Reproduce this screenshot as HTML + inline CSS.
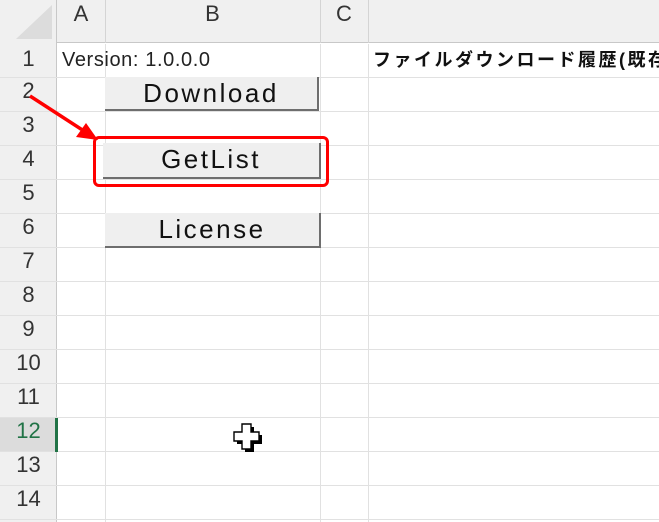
<!DOCTYPE html>
<html><head><meta charset="utf-8"><style>
*{margin:0;padding:0;box-sizing:border-box}
body{width:659px;height:522px;overflow:hidden;background:#fff;position:relative;font-family:"Liberation Sans","Noto Sans CJK JP",sans-serif}
.a{position:absolute}
.hl{position:absolute;height:1px;background:#e1e1e1}
.vl{position:absolute;width:1px;background:#e1e1e1}
.rn{position:absolute;left:0;width:57px;text-align:center;font-size:22px;color:#333;line-height:34px}
.btn{position:absolute;background:#efefef;border-right:2px solid #6e6e6e;border-bottom:2px solid #6e6e6e;text-align:center;font-size:26px;color:#111;letter-spacing:2.5px}
</style></head><body>
<div class="a" style="left:0;top:0;width:659px;height:43px;background:#f0f0f0;border-bottom:1px solid #c8c8c8"></div>
<div class="a" style="left:0;top:0;width:57px;height:522px;background:#f0f0f0;border-right:1px solid #c8c8c8"></div>
<svg class="a" style="left:14px;top:3px" width="40" height="38"><polygon points="38,2 38,36 2,36" fill="#dcdcdc"/></svg>
<div class="a" style="left:57px;top:0;width:48px;text-align:center;font-size:22px;line-height:28px;color:#333">A</div>
<div class="a" style="left:105px;top:0;width:215px;text-align:center;font-size:22px;line-height:28px;color:#333">B</div>
<div class="a" style="left:320px;top:0;width:48px;text-align:center;font-size:22px;line-height:28px;color:#333">C</div>
<div class="vl" style="left:105px;top:0;height:43px;background:#d4d4d4"></div>
<div class="vl" style="left:320px;top:0;height:43px;background:#d4d4d4"></div>
<div class="vl" style="left:368px;top:0;height:43px;background:#d4d4d4"></div>
<div class="vl" style="left:105px;top:44px;height:478px"></div>
<div class="vl" style="left:320px;top:44px;height:478px"></div>
<div class="vl" style="left:368px;top:44px;height:478px"></div>
<div class="hl" style="left:0;top:77px;width:659px"></div>
<div class="hl" style="left:0;top:111px;width:659px"></div>
<div class="hl" style="left:0;top:145px;width:659px"></div>
<div class="hl" style="left:0;top:179px;width:659px"></div>
<div class="hl" style="left:0;top:213px;width:659px"></div>
<div class="hl" style="left:0;top:247px;width:659px"></div>
<div class="hl" style="left:0;top:281px;width:659px"></div>
<div class="hl" style="left:0;top:315px;width:659px"></div>
<div class="hl" style="left:0;top:349px;width:659px"></div>
<div class="hl" style="left:0;top:383px;width:659px"></div>
<div class="hl" style="left:0;top:417px;width:659px"></div>
<div class="hl" style="left:0;top:451px;width:659px"></div>
<div class="hl" style="left:0;top:485px;width:659px"></div>
<div class="hl" style="left:0;top:519px;width:659px"></div>
<div class="a" style="left:0;top:418px;width:57px;height:33px;background:#dcdcdc"></div>
<div class="a" style="left:55px;top:418px;width:3px;height:34px;background:#217346"></div>
<div class="rn" style="top:42px">1</div>
<div class="rn" style="top:74px">2</div>
<div class="rn" style="top:108px">3</div>
<div class="rn" style="top:142px">4</div>
<div class="rn" style="top:176px">5</div>
<div class="rn" style="top:210px">6</div>
<div class="rn" style="top:244px">7</div>
<div class="rn" style="top:278px">8</div>
<div class="rn" style="top:312px">9</div>
<div class="rn" style="top:346px">10</div>
<div class="rn" style="top:380px">11</div>
<div class="rn" style="top:414px;color:#217346">12</div>
<div class="rn" style="top:448px">13</div>
<div class="rn" style="top:482px">14</div>
<div class="a" style="left:62px;top:48px;font-size:20px;color:#222;line-height:24px;letter-spacing:0.6px">Version: 1.0.0.0</div>
<div class="a" style="left:373px;top:48px;font-size:18px;font-weight:bold;color:#111;line-height:24px;white-space:nowrap;letter-spacing:2.5px">ファイルダウンロード履歴(既存</div>
<div class="btn" style="left:105px;top:77px;width:214px;height:34px;line-height:32px">Download</div>
<div class="btn" style="left:103px;top:143px;width:218px;height:36px;line-height:33px">GetList</div>
<div class="btn" style="left:105px;top:213px;width:216px;height:35px;line-height:33px">License</div>
<div class="a" style="left:93px;top:136px;width:236px;height:51px;border:3px solid #f00;border-radius:6px"></div>
<svg class="a" style="left:0;top:0" width="659" height="522">
<line x1="30" y1="96" x2="84" y2="131" stroke="#f00" stroke-width="3.5"/>
<polygon points="98,140 76,137 86,123" fill="#f00"/>
<path d="M242,424h9v8h8v9h-8v8h-9v-8h-8v-9h8z" fill="#000" transform="translate(3,3)"/>
<path d="M242,424h9v8h8v9h-8v8h-9v-8h-8v-9h8z" fill="#fff" stroke="#000" stroke-width="1.4"/>
</svg>
</body></html>
